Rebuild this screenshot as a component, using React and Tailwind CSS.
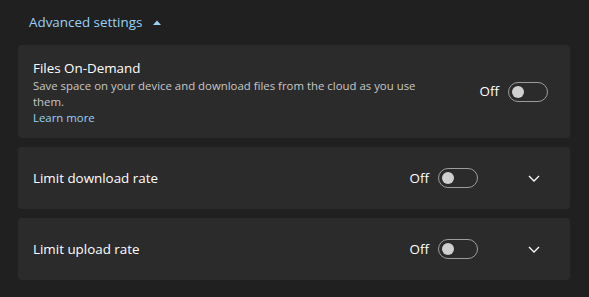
function Toggle() {
  return (
    <div className="flex h-5 w-10 items-center rounded-full border border-[#9d9d9d] px-[3px]">
      <div className="h-3 w-3 rounded-full bg-[#cfcfcf]" />
    </div>
  );
}

function Chevron() {
  return (
    <svg width="12" height="7" viewBox="0 0 12 7" fill="none">
      <path d="M1 1 L6 6 L11 1" stroke="white" strokeWidth="1.3" />
    </svg>
  );
}

function RateRow({ title }) {
  return (
    <div className="flex h-[62px] items-center rounded bg-[#2b2b2b] pl-[15px] pr-[30px]">
      <span className="flex-1 text-[13.4px] text-white">{title}</span>
      <span className="mr-[9px] text-[13.4px] text-white">Off</span>
      <Toggle />
      <div className="ml-[50px]">
        <Chevron />
      </div>
    </div>
  );
}

export default function App() {
  return (
    <div className="h-[297px] w-[589px] bg-[#202020] pl-[18px] pr-[19px] font-['Segoe_UI','Open_Sans',sans-serif]">
      <div className="flex h-[45px] items-center pl-[11px] pb-[1px]">
        <span className="text-[13.4px] text-[#99d1f9]">Advanced settings</span>
        <svg className="ml-[11px]" width="8" height="5" viewBox="0 0 8 5">
          <path d="M0 5 L4 0.5 L8 5 Z" fill="#99d1f9" />
        </svg>
      </div>
      <div className="flex flex-col gap-[9px]">
        <div className="flex h-[93px] items-center rounded bg-[#2b2b2b] pl-[15px] pr-[22px]">
          <div className="flex-1 pr-[50px]">
            <div className="text-[13.4px] leading-[20px] text-white">Files On-Demand</div>
            <div className="text-[11.4px] leading-[16px] text-[#c8c8c8]">
              Save space on your device and download files from the cloud as you use them.
            </div>
            <div className="text-[11.4px] leading-[16px] text-[#99d1f9]">Learn more</div>
          </div>
          <span className="mr-[9px] text-[13.4px] text-white">Off</span>
          <Toggle />
        </div>
        <RateRow title="Limit download rate" />
        <RateRow title="Limit upload rate" />
      </div>
    </div>
  );
}
